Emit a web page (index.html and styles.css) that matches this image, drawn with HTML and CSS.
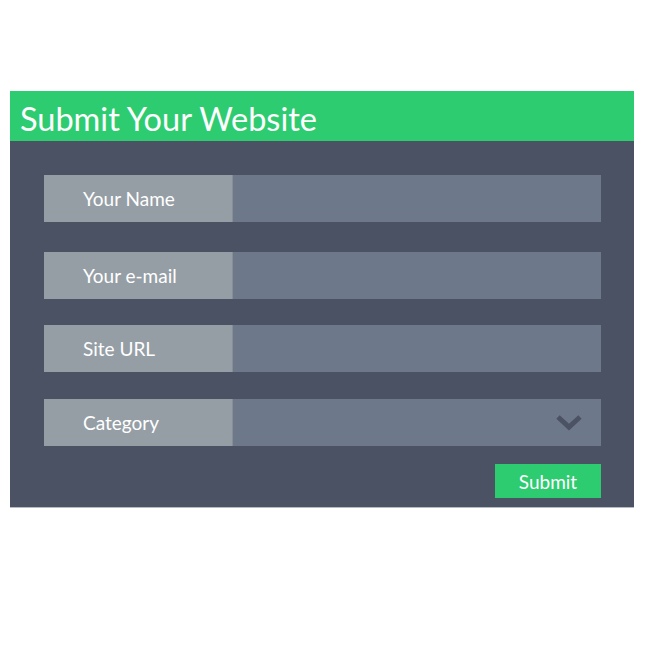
FILE: index.html
```html
<!DOCTYPE html>
<html lang="en">
<head>
    <meta charset="UTF-8">
    <meta name="viewport" content="width=device-width, initial-scale=1.0">
    <title>Submit Your Website</title>
    <link rel="stylesheet" href="styles.css">
</head>
<body>

<div class="card">
    <h1 class="card-title">Submit Your Website</h1>
    <form class="card-body">
        <div class="field field-name">
            <label for="name">Your Name</label>
            <input type="text" id="name" />
        </div>
        <div class="field field-email">
            <label for="email">Your e-mail</label>
            <input type="email" id="email" />
        </div>
        <div class="field">
            <label for="url">Site URL</label>
            <input type="text" id="url" />
        </div>
        <div class="field">
            <label for="category">Category</label>
            <div class="select-box">
                <select id="category">
                    <option></option>
                </select>
                <svg class="chevron" width="28" height="18" viewBox="0 0 28 18">
                    <path d="M3 3 L14 13 L25 3" fill="none" stroke="#4b5263" stroke-width="5" />
                </svg>
            </div>
        </div>
        <div class="actions">
            <button type="button" class="submit">Submit</button>
        </div>
    </form>
</div>

</body>
</html>
```

FILE: styles.css
```css
body {
    margin: 0;
    font-family: Lato, "Open Sans", sans-serif;
    background: #fff;
}
.card {
    margin: 91px 0 0 10px;
    width: 624px;
    background: #4b5263;
    border-bottom: 1px solid #b5bcc4;
}
.card-title {
    margin: 0;
    height: 50px;
    background: #2ecc71;
    color: #fff;
    font-size: 32.5px;
    font-weight: 400;
    line-height: 55px;
    padding-left: 10px;
}
.card-body {
    padding: 34px 33px 9px 34px;
}
.field {
    display: flex;
    height: 47px;
    margin-bottom: 27px;
}
.field-name {
    margin-bottom: 30px;
}
.field-email {
    margin-bottom: 26px;
}
.field label {
    width: 149px;
    padding-left: 39px;
    background: #959ea5;
    color: #fff;
    font-size: 19px;
    line-height: 47px;
    border-right: 1px solid #868f98;
}
.field input, .select-box {
    flex: 1;
    border: none;
    background: #6e788b;
    margin: 0;
}
.select-box {
    position: relative;
}
.select-box select {
    width: 100%;
    height: 100%;
    border: none;
    background: transparent;
    appearance: none;
}
.chevron {
    position: absolute;
    right: 18px;
    top: 15px;
}
.actions {
    display: flex;
    justify-content: flex-end;
    margin-top: -9px;
}
.submit {
    width: 106px;
    height: 34px;
    background: #2ecc71;
    color: #fff;
    border: none;
    font-family: Lato, "Open Sans", sans-serif;
    font-size: 19px;
    cursor: pointer;
}
```
